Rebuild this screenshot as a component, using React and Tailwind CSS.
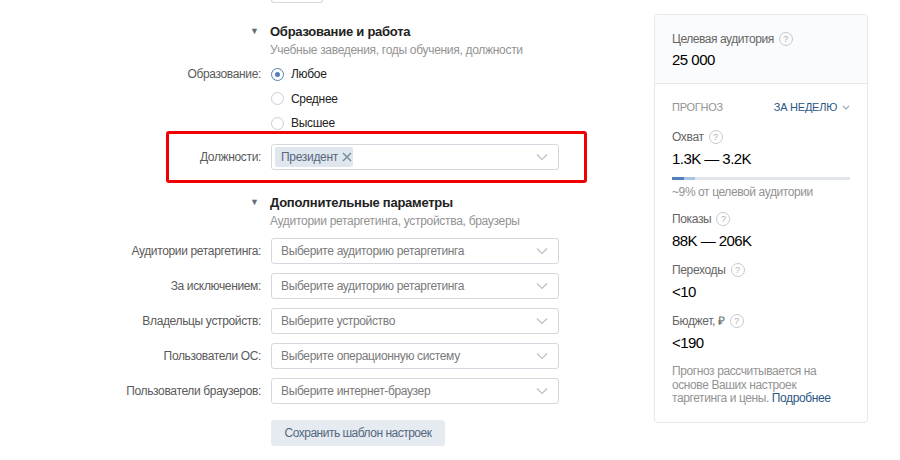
import React from "react";

const font = { fontFamily: '"Liberation Sans", Arial, sans-serif' };

function Chevron() {
  return (
    <svg width="12" height="8" viewBox="0 0 12 8">
      <path d="M1 1.5l5 5 5-5" fill="none" stroke="#b8c1cc" strokeWidth="1.2" />
    </svg>
  );
}

function Help() {
  return (
    <span className="inline-flex items-center justify-center w-[14px] h-[14px] rounded-full border border-[#c5cbd1] text-[9px] text-[#a8b0b8] ml-[5px] leading-none tracking-normal">
      ?
    </span>
  );
}

function Radio({ checked, label }) {
  return (
    <div className="flex items-center h-[18px]">
      <span
        className={
          "w-[13px] h-[13px] rounded-full border flex items-center justify-center " +
          (checked ? "border-[#5181b8]" : "border-[#c5d0db]")
        }
      >
        {checked && <span className="w-[5px] h-[5px] rounded-full bg-[#5181b8]" />}
      </span>
      <span className="ml-[7px] text-[12px] tracking-[-0.3px] text-[#222]">{label}</span>
    </div>
  );
}

function Select({ label, placeholder }) {
  return (
    <div className="flex items-center h-[26px]">
      <div className="w-[261px] text-right text-[12px] tracking-[-0.35px] text-[#5a5a5a]">{label}</div>
      <div className="ml-[10px] w-[288px] h-[26px] border border-[#d3d9de] rounded-[3px] flex items-center justify-between pl-[9px] pr-[10px]">
        <span className="text-[12px] tracking-[-0.35px] text-[#7a7a7a]">{placeholder}</span>
        <Chevron />
      </div>
    </div>
  );
}

function SectionHead({ title, sub }) {
  return (
    <div>
      <div className="flex items-center h-[16px]">
        <div className="w-[261px] flex justify-end pr-[2px]">
          <span className="text-[9px] text-[#626d7a]">▼</span>
        </div>
        <div className="ml-[9px] text-[13px] tracking-[-0.25px] font-bold text-[#222]">{title}</div>
      </div>
      <div className="flex items-center h-[16px] mt-[2px]">
        <div className="w-[261px]" />
        <div className="ml-[9px] text-[12px] tracking-[-0.3px] text-[#939393]">{sub}</div>
      </div>
    </div>
  );
}

function Metric({ label, value, first }) {
  return (
    <>
      <div
        className={
          (first ? "mt-[15px]" : "mt-[11px]") +
          " h-[16px] flex items-center text-[12px] tracking-[-0.35px] text-[#656565]"
        }
      >
        {label} <Help />
      </div>
      <div className="mt-[4px] h-[20px] flex items-center text-[15px] tracking-[-0.55px] text-[#000]">
        {value}
      </div>
    </>
  );
}

export default function App() {
  return (
    <div className="w-[900px] h-[460px] bg-white overflow-hidden flex items-start" style={font}>
      {/* Form column */}
      <div className="w-[654px] shrink-0">
        <div className="ml-[271px] w-[52px] h-[3px] border-x border-b border-[#d3d9de] rounded-b-[3px]" />

        <div className="mt-[21px]">
          <SectionHead title="Образование и работа" sub="Учебные заведения, годы обучения, должности" />
        </div>

        <div className="flex mt-[7px]">
          <div className="w-[261px] h-[18px] flex items-center justify-end text-[12px] tracking-[-0.35px] text-[#5a5a5a]">
            Образование:
          </div>
          <div className="ml-[10px] flex flex-col gap-[6.5px]">
            <Radio checked label="Любое" />
            <Radio label="Среднее" />
            <Radio label="Высшее" />
          </div>
        </div>

        <div className="ml-[166px] mt-[-1px] w-[421px] h-[52px] border-[3px] border-[#f00000] rounded-[3px] flex items-center">
          <div className="w-[92px] text-right text-[12px] tracking-[-0.35px] text-[#5a5a5a]">Должности:</div>
          <div className="ml-[10px] w-[288px] h-[26px] border border-[#d3d9de] rounded-[3px] flex items-center justify-between pl-[3px] pr-[10px]">
            <span className="h-[20px] w-[78px] bg-[#dfe6ee] rounded-[2px] flex items-center pl-[6px] text-[12px] tracking-[-0.3px] text-[#55677d]">
              Президент
              <svg width="10" height="10" viewBox="0 0 10 10" className="ml-[4px]">
                <path d="M1 1l8 8M9 1l-8 8" stroke="#7b8ba0" strokeWidth="1.5" />
              </svg>
            </span>
            <Chevron />
          </div>
        </div>

        <div className="mt-[12px]">
          <SectionHead title="Дополнительные параметры" sub="Аудитории ретаргетинга, устройства, браузеры" />
        </div>

        <div className="mt-[9px] flex flex-col gap-[9px]">
          <Select label="Аудитории ретаргетинга:" placeholder="Выберите аудиторию ретаргетинга" />
          <Select label="За исключением:" placeholder="Выберите аудиторию ретаргетинга" />
          <Select label="Владельцы устройств:" placeholder="Выберите устройство" />
          <Select label="Пользователи ОС:" placeholder="Выберите операционную систему" />
          <Select label="Пользователи браузеров:" placeholder="Выберите интернет-браузер" />
        </div>

        <div className="mt-[16px] ml-[271px]">
          <button className="h-[26px] w-[174px] bg-[#e5ebf1] rounded-[3px] text-[12px] tracking-[-0.5px] text-[#55677d]">
            Сохранить шаблон настроек
          </button>
        </div>
      </div>

      {/* Forecast panel */}
      <div className="mt-[14px] w-[214px] border border-[#e7e8ec] rounded-[4px] overflow-hidden">
        <div className="bg-[#fafbfc] border-b border-[#e7e8ec] pl-[17px] pt-[16px] pb-[13px]">
          <div className="h-[16px] flex items-center text-[12px] tracking-[-0.45px] text-[#656565]">
            Целевая аудитория <Help />
          </div>
          <div className="h-[20px] mt-[3px] flex items-center text-[15px] tracking-[-0.5px] text-[#000]">25 000</div>
        </div>

        <div className="pl-[17px] pr-[17px] pt-[16px] pb-[16px]">
          <div className="h-[14px] flex items-center justify-between text-[11px] tracking-[-0.25px] uppercase">
            <span className="text-[#939393]">Прогноз</span>
            <span className="text-[#2a5885] flex items-center">
              За неделю
              <svg width="8" height="5" viewBox="0 0 8 5" className="ml-[5px]">
                <path d="M1 1l3 3 3-3" fill="none" stroke="#9aa8b8" strokeWidth="1.1" />
              </svg>
            </span>
          </div>

          <Metric first label="Охват" value="1.3K — 3.2K" />
          <div className="mt-[8px] h-[3px] bg-[#e1e5eb] flex">
            <div className="w-[12px] bg-[#5181b8]" />
            <div className="w-[11px] bg-[#a8c4e0]" />
          </div>
          <div className="mt-[4px] h-[16px] flex items-center text-[12px] tracking-[-0.4px] text-[#939393]">
            ~9% от целевой аудитории
          </div>

          <div className="mt-[1px]">
            <Metric label="Показы" value="88K — 206K" />
            <Metric label="Переходы" value="<10" />
            <Metric label="Бюджет, ₽" value="<190" />
          </div>

          <p className="mt-[12px] text-[12px] leading-[13.5px] tracking-[-0.4px] text-[#939393]">
            Прогноз рассчитывается на основе Ваших настроек таргетинга и цены.{" "}
            <span className="text-[#2a5885]">Подробнее</span>
          </p>
        </div>
      </div>
    </div>
  );
}
